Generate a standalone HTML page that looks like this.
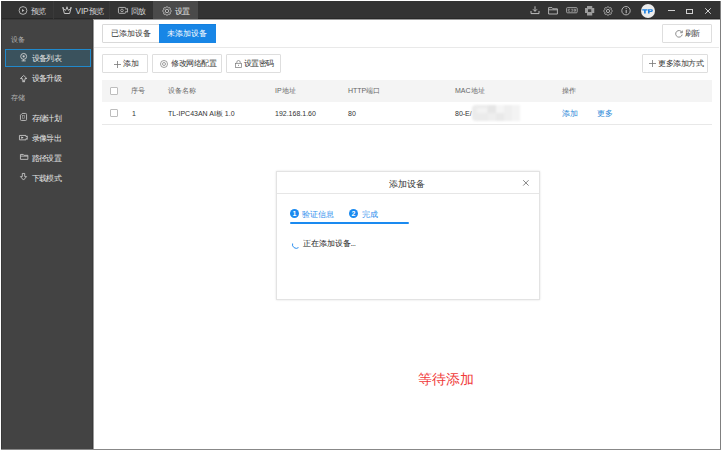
<!DOCTYPE html>
<html><head><meta charset="utf-8">
<style>
*{margin:0;padding:0;box-sizing:border-box;}
html,body{width:722px;height:451px;overflow:hidden;background:#fff;font-family:"Liberation Sans",sans-serif;position:relative;}
.a{position:absolute;white-space:nowrap;}
svg{position:absolute;overflow:visible;}
.tab{position:absolute;top:1px;height:18px;color:#d8d8d8;font-size:8px;line-height:22px;white-space:nowrap;letter-spacing:-0.8px;}
.sep{position:absolute;top:1px;width:1px;height:18px;background:#3a3a3a;}
.sh{position:absolute;left:11px;color:#b4b4b4;font-size:6.6px;line-height:7px;white-space:nowrap;}
.si{position:absolute;left:31.6px;color:#e6e6e6;font-size:8px;line-height:8px;white-space:nowrap;letter-spacing:-0.55px;}
.btn{position:absolute;border:1px solid #dedede;border-radius:1px;background:#fff;}
.bt{position:absolute;color:#333;font-size:7.6px;line-height:8px;white-space:nowrap;}
.th{position:absolute;color:#666;font-size:7px;line-height:8px;white-space:nowrap;}
.td{position:absolute;color:#333;font-size:7px;line-height:8px;white-space:nowrap;}
.cb{position:absolute;width:8px;height:8px;border:1px solid #bdbdbd;border-radius:1px;background:#fff;}
</style></head><body>
<svg width="0" height="0" style="position:absolute"><defs>
<path id="gear" d="M9.40 5.00 L9.35 5.23 L9.21 5.44 L9.00 5.63 L8.76 5.80 L8.53 5.94 L8.32 6.08 L8.18 6.22 L8.12 6.39 L8.11 6.59 L8.16 6.82 L8.23 7.10 L8.28 7.38 L8.29 7.66 L8.24 7.92 L8.11 8.11 L7.92 8.24 L7.66 8.29 L7.38 8.28 L7.10 8.23 L6.83 8.16 L6.59 8.11 L6.39 8.12 L6.22 8.18 L6.08 8.32 L5.94 8.53 L5.80 8.76 L5.63 9.00 L5.44 9.21 L5.23 9.35 L5.00 9.40 L4.77 9.35 L4.56 9.21 L4.37 9.00 L4.20 8.76 L4.06 8.53 L3.92 8.32 L3.78 8.18 L3.61 8.12 L3.41 8.11 L3.18 8.16 L2.90 8.23 L2.62 8.28 L2.34 8.29 L2.08 8.24 L1.89 8.11 L1.76 7.92 L1.71 7.66 L1.72 7.38 L1.77 7.10 L1.84 6.82 L1.89 6.59 L1.88 6.39 L1.82 6.22 L1.68 6.08 L1.47 5.94 L1.24 5.80 L1.00 5.63 L0.79 5.44 L0.65 5.23 L0.60 5.00 L0.65 4.77 L0.79 4.56 L1.00 4.37 L1.24 4.20 L1.47 4.06 L1.68 3.92 L1.82 3.78 L1.88 3.61 L1.89 3.41 L1.84 3.18 L1.77 2.90 L1.72 2.62 L1.71 2.34 L1.76 2.08 L1.89 1.89 L2.08 1.76 L2.34 1.71 L2.62 1.72 L2.90 1.77 L3.17 1.84 L3.41 1.89 L3.61 1.88 L3.78 1.82 L3.92 1.68 L4.06 1.47 L4.20 1.24 L4.37 1.00 L4.56 0.79 L4.77 0.65 L5.00 0.60 L5.23 0.65 L5.44 0.79 L5.63 1.00 L5.80 1.24 L5.94 1.47 L6.08 1.68 L6.22 1.82 L6.39 1.88 L6.59 1.89 L6.83 1.84 L7.10 1.77 L7.38 1.72 L7.66 1.71 L7.92 1.76 L8.11 1.89 L8.24 2.08 L8.29 2.34 L8.28 2.62 L8.23 2.90 L8.16 3.18 L8.11 3.41 L8.12 3.61 L8.18 3.78 L8.32 3.92 L8.53 4.06 L8.76 4.20 L9.00 4.37 L9.21 4.56 L9.35 4.77Z"/>
</defs></svg>
<!-- frame -->
<div class="a" style="left:1px;top:1px;width:1px;height:449px;background:#383838"></div>
<div class="a" style="left:720px;top:1px;width:1px;height:449px;background:#808080"></div>
<div class="a" style="left:1px;top:449px;width:720px;height:1px;background:#888"></div>

<!-- top bar -->
<div class="a" style="left:2px;top:1px;width:718px;height:18px;background:#333;border-bottom:1px solid #282828"></div>
<div class="a" style="left:94px;top:19px;width:626px;height:1px;background:#9a9a9a"></div>
<svg style="left:18px;top:6px" width="10" height="10" viewBox="0 0 10 10"><circle cx="5" cy="4.5" r="3.9" fill="none" stroke="#bdbdbd" stroke-width="0.9"/><path d="M4 2.9 L6.4 4.5 L4 6.1Z" fill="#bdbdbd"/></svg>
<div class="tab" style="left:31px">预览</div>
<div class="sep" style="left:53px"></div>
<svg style="left:62px;top:6px" width="10" height="9" viewBox="0 0 10 9"><path d="M1 2.2 L2.4 7.5 H7.6 L9 2.2 L6.6 4.4 L5 1.6 L3.4 4.4Z" fill="none" stroke="#c4c4c4" stroke-width="1" stroke-linejoin="round"/><circle cx="1" cy="1.8" r="0.8" fill="#c4c4c4"/><circle cx="5" cy="1.2" r="0.8" fill="#c4c4c4"/><circle cx="9" cy="1.8" r="0.8" fill="#c4c4c4"/></svg>
<div class="tab" style="left:75.5px;letter-spacing:0;line-height:21px"><span style="font-size:8.4px;letter-spacing:-0.15px">VIP</span><span style="letter-spacing:-1px">预览</span></div>
<div class="sep" style="left:109px"></div>
<svg style="left:118px;top:7px" width="10" height="7" viewBox="0 0 10 7"><path d="M1.3 0.45 H6.9 Q7.7 0.45 7.7 1.3 V2.2 L9.55 1.6 V5.1 L7.7 4.5 V5.4 Q7.7 6.3 6.9 6.3 H1.3 Q0.45 6.3 0.45 5.4 V1.3 Q0.45 0.45 1.3 0.45Z" fill="none" stroke="#bdbdbd" stroke-width="0.9" stroke-linejoin="round"/><circle cx="4" cy="3.4" r="1.3" fill="none" stroke="#bdbdbd" stroke-width="0.8"/></svg>
<div class="tab" style="left:131px">回放</div>
<div class="a" style="left:153px;top:1px;width:45px;height:18px;background:#4a4a4a"></div>
<svg style="left:162px;top:5.5px" width="10" height="10" viewBox="0 0 10 10"><use href="#gear" fill="none" stroke="#cfcfcf" stroke-width="0.9"/><circle cx="5" cy="5" r="1.7" fill="none" stroke="#cfcfcf" stroke-width="0.8"/></svg>
<div class="tab" style="left:175px;color:#e8e8e8">设置</div>

<!-- right icons -->
<svg style="left:530px;top:6px" width="10" height="9" viewBox="0 0 10 9"><path d="M5 0.3 V5.3 M3 3.3 L5 5.3 L7 3.3 M1 5 V7.6 H9 V5" fill="none" stroke="#bdbdbd" stroke-width="1"/></svg>
<svg style="left:548px;top:7px" width="10" height="8" viewBox="0 0 10 8"><path d="M0.6 0.6 H4 L5 1.8 H9.4 V7 H0.6Z M0.6 2.8 H9.4" fill="none" stroke="#bdbdbd" stroke-width="0.9"/></svg>
<svg style="left:565.5px;top:7.3px" width="12" height="6.5" viewBox="0 0 12 6.5"><rect x="0.6" y="0.6" width="10.6" height="5.2" rx="0.9" fill="none" stroke="#ababab" stroke-width="0.9"/><path d="M2.3 2.3 H4.2 M2.3 4.2 H4.2 M2.3 2.3 V4.2 M5.2 2.3 H6.8 V4.2 H5.2 M7.8 2.3 H9.5 V4.2 H7.8 M7.8 3.2 H9.5" fill="none" stroke="#ababab" stroke-width="0.7"/></svg>
<svg style="left:585px;top:5.75px" width="9.5" height="9.5" viewBox="0 0 9.5 9.5"><rect x="0" y="2" width="9.25" height="5" fill="#9c9c9c"/><rect x="2" y="0" width="5.25" height="9.5" fill="#9c9c9c"/><rect x="3" y="3.25" width="3.25" height="2.75" fill="#3a3a3a"/></svg>
<svg style="left:603px;top:5.7px" width="10" height="10" viewBox="0 0 10 10"><use href="#gear" fill="none" stroke="#bdbdbd" stroke-width="0.9"/><circle cx="5" cy="5" r="1.6" fill="none" stroke="#bdbdbd" stroke-width="0.9"/></svg>
<svg style="left:621.3px;top:6px" width="10" height="10" viewBox="0 0 10 10"><circle cx="5" cy="4.7" r="4.2" fill="none" stroke="#bdbdbd" stroke-width="0.9"/><path d="M5.2 3.9 V7.2" stroke="#c4c4c4" stroke-width="1"/><circle cx="5.2" cy="2.5" r="0.6" fill="#c4c4c4"/></svg>
<div class="a" style="left:641px;top:3.5px;width:14px;height:14px;border-radius:50%;background:#ececec"></div>
<svg style="left:642px;top:8.5px" width="11" height="5" viewBox="0 0 11 5"><path d="M0.2 0.2 H5.6 V1.6 H3.7 V4.6 H2.1 V1.6 H0.2Z M6 0.2 H9.6 Q10.9 0.2 10.9 1.6 Q10.9 3 9.6 3 H7.6 V4.6 H6Z M7.6 1.3 V1.9 H9.2 Q9.4 1.9 9.4 1.6 Q9.4 1.3 9.2 1.3Z" fill="#1a7fe0" fill-rule="evenodd"/></svg>
<div class="a" style="left:668px;top:10px;width:7px;height:1px;background:#d0d0d0"></div>
<div class="a" style="left:686px;top:8.5px;width:7px;height:5px;border:1px solid #d0d0d0;border-top-width:1.5px"></div>
<svg style="left:705px;top:7.5px" width="6" height="6" viewBox="0 0 6 6"><path d="M0.2 0.2 L5.8 5.8 M5.8 0.2 L0.2 5.8" stroke="#d0d0d0" stroke-width="1"/></svg>

<!-- sidebar -->
<div class="a" style="left:2px;top:20px;width:90px;height:429px;background:#434343"></div>
<div class="a" style="left:2px;top:19px;width:91px;height:1px;background:#383838"></div>
<div class="a" style="left:92px;top:19px;width:1px;height:430px;background:#3a3a3a"></div>
<div class="a" style="left:93px;top:19px;width:1px;height:430px;background:#9a9a9a"></div>
<div class="sh" style="top:36px">设备</div>
<svg style="left:20px;top:74.5px" width="8" height="8" viewBox="0 0 8 8"><path d="M3.65 0.45 L6.85 3.5 H5 V5.3 H2.3 V3.5 H0.45Z" fill="none" stroke="#c4c4c4" stroke-width="0.9" stroke-linejoin="round"/><rect x="2.3" y="5.8" width="2.7" height="1.4" fill="#b8b8b8"/></svg>
<svg style="left:20px;top:113.4px" width="7" height="8" viewBox="0 0 7 8"><path d="M2.2 0.45 H5.6 Q6.55 0.45 6.55 1.4 V6.5 Q6.55 7.45 5.6 7.45 H1.4 Q0.45 7.45 0.45 6.5 V2.2Z" fill="none" stroke="#c4c4c4" stroke-width="0.9"/><rect x="2.5" y="2.6" width="2" height="2.6" fill="none" stroke="#aaa" stroke-width="0.6"/></svg>
<svg style="left:19.2px;top:134.7px" width="9" height="6" viewBox="0 0 9 6"><path d="M0.45 0.45 H7 V1.8 L8.25 1 V4.3 L7 3.5 V4.85 H0.45Z" fill="none" stroke="#c4c4c4" stroke-width="0.9" stroke-linejoin="round"/><path d="M2.3 1.6 L4.6 2.65 L2.3 3.7Z" fill="#e8e8e8"/></svg>
<svg style="left:19.6px;top:154.2px" width="9" height="6" viewBox="0 0 9 6"><path d="M0.45 0.45 H3.3 L4.1 1.3 H7.85 V5.35 H0.45Z M0.45 2.1 H7.85" fill="none" stroke="#c4c4c4" stroke-width="0.9" stroke-linejoin="round"/></svg>
<svg style="left:20px;top:173.4px" width="7" height="8" viewBox="0 0 7 8"><path d="M2.3 0.45 H4.7 V3.6 H6.55 L3.5 7.05 L0.45 3.6 H2.3Z" fill="none" stroke="#c4c4c4" stroke-width="0.9" stroke-linejoin="round"/></svg>

<div class="a" style="left:5px;top:49px;width:86px;height:18px;background:#3a525d;border:1px solid #2089cc"></div>
<svg style="left:20px;top:53.4px" width="8" height="9" viewBox="0 0 8 9"><circle cx="3.65" cy="3.4" r="2.95" fill="none" stroke="#cfcfcf" stroke-width="0.9"/><circle cx="3.65" cy="3.4" r="1.1" fill="#cfcfcf"/><path d="M1.6 7.9 H5.7 M3.65 6.3 V7.9" stroke="#cfcfcf" stroke-width="0.9"/></svg>
<div class="si" style="top:54.5px">设备列表</div>
<div class="si" style="top:74.5px">设备升级</div>
<div class="sh" style="top:94px">存储</div>
<div class="si" style="top:114.5px">存储计划</div>
<div class="si" style="top:134.5px">录像导出</div>
<div class="si" style="top:155px">路径设置</div>
<div class="si" style="top:175px">下载模式</div>

<!-- tabs -->
<div class="btn" style="left:102px;top:24px;width:58px;height:19px;border-color:#d9d9d9"></div>
<div class="bt" style="left:111px;top:30px;color:#333">已添加设备</div>
<div class="a" style="left:159px;top:24px;width:57px;height:19px;background:#1886e6;border-top:1px solid #1380df"></div>
<div class="bt" style="left:167px;top:30px;color:#fff">未添加设备</div>
<div class="btn" style="left:662px;top:24px;width:50px;height:19px"></div>
<svg style="left:675px;top:29.5px" width="8" height="8" viewBox="0 0 8 8"><path d="M6.9 2.3 A3.3 3.3 0 1 0 7.2 4.6" fill="none" stroke="#707070" stroke-width="0.8"/><path d="M7.3 0.6 V2.7 H5.2" fill="none" stroke="#707070" stroke-width="0.8"/></svg>
<div class="bt" style="left:685px;top:30px;letter-spacing:-1px">刷新</div>
<div class="a" style="left:94px;top:47px;width:625px;height:1px;background:#e9e9e9"></div>

<!-- toolbar -->
<div class="btn" style="left:102px;top:54px;width:46px;height:19px"></div>
<svg style="left:114px;top:60.5px" width="7" height="7" viewBox="0 0 7 7"><path d="M3.5 0 V7 M0 3.5 H7" stroke="#777" stroke-width="0.8"/></svg>
<div class="bt" style="left:123px;top:60px">添加</div>
<div class="btn" style="left:152px;top:54px;width:70px;height:19px"></div>
<svg style="left:160px;top:60px" width="8" height="8" viewBox="0 0 8 8"><circle cx="4" cy="4" r="3.5" fill="none" stroke="#777" stroke-width="0.7"/><circle cx="4" cy="4" r="1.5" fill="none" stroke="#777" stroke-width="0.7"/></svg>
<div class="bt" style="left:171px;top:60px;letter-spacing:-0.5px">修改网络配置</div>
<div class="btn" style="left:226px;top:54px;width:55px;height:19px"></div>
<svg style="left:235px;top:59.5px" width="7" height="8" viewBox="0 0 7 8"><path d="M1.8 3.3 V2.2 A1.7 1.7 0 0 1 5.2 2.2 V3.3" fill="none" stroke="#777" stroke-width="0.7"/><rect x="0.5" y="3.3" width="6" height="4.2" fill="none" stroke="#777" stroke-width="0.7"/><path d="M3.5 4.8 V6" stroke="#777" stroke-width="0.7"/></svg>
<div class="bt" style="left:244px;top:60px;letter-spacing:-0.7px">设置密码</div>
<div class="btn" style="left:642px;top:54px;width:66px;height:19px"></div>
<svg style="left:649px;top:60px" width="7" height="7" viewBox="0 0 7 7"><path d="M3.5 0 V7 M0 3.5 H7" stroke="#777" stroke-width="0.8"/></svg>
<div class="bt" style="left:658px;top:60px;letter-spacing:-0.4px">更多添加方式</div>

<!-- table -->
<div class="a" style="left:102px;top:80px;width:610px;height:22px;background:#f4f4f4"></div>
<div class="cb" style="left:110px;top:87px"></div>
<div class="th" style="left:131px;top:87px">序号</div>
<div class="th" style="left:168px;top:87px">设备名称</div>
<div class="th" style="left:275px;top:87px">IP地址</div>
<div class="th" style="left:348px;top:87px">HTTP端口</div>
<div class="th" style="left:455px;top:87px">MAC地址</div>
<div class="th" style="left:562px;top:87px">操作</div>

<div class="cb" style="left:110px;top:109px"></div>
<div class="td" style="left:132px;top:110px">1</div>
<div class="td" style="left:168px;top:110px">TL-IPC43AN AI板 1.0</div>
<div class="td" style="left:275px;top:110px">192.168.1.60</div>
<div class="td" style="left:348px;top:110px">80</div>
<div class="td" style="left:455px;top:110px">80-E/</div>
<div class="a" style="left:471px;top:105px;width:49px;height:16px;filter:blur(0.8px)">
<div class="a" style="left:1px;top:0;width:17px;height:16px;background:#ebebeb;border-radius:4px 0 0 4px"></div>
<div class="a" style="left:6px;top:3px;width:10px;height:5px;background:#f3f3f3"></div>
<div class="a" style="left:17px;top:0;width:8px;height:8px;background:#e6e6e6"></div>
<div class="a" style="left:17px;top:8px;width:8px;height:8px;background:#eeeeee"></div>
<div class="a" style="left:25px;top:0;width:8px;height:8px;background:#f5f5f5"></div>
<div class="a" style="left:25px;top:8px;width:8px;height:8px;background:#e9e9e9"></div>
<div class="a" style="left:33px;top:0;width:8px;height:16px;background:#efefef"></div>
<div class="a" style="left:41px;top:0;width:8px;height:16px;background:#f3f3f3"></div>
</div>
<div class="td" style="left:562px;top:110px;color:#2d8ad8;font-size:7.6px">添加</div>
<div class="td" style="left:597px;top:110px;color:#2d8ad8;font-size:7.6px">更多</div>
<div class="a" style="left:102px;top:124px;width:610px;height:1px;background:#e8e8e8"></div>

<!-- dialog -->
<div class="a" style="left:276px;top:171px;width:264px;height:129px;background:#fff;border:1px solid #e3e3e3;box-shadow:0 0 2px rgba(0,0,0,0.12)"></div>
<div class="a" style="left:277px;top:193px;width:262px;height:1px;background:#e6e6e6"></div>
<div class="a" style="left:389px;top:179.5px;font-size:9px;line-height:9px;color:#333">添加设备</div>
<svg style="left:523px;top:180.2px" width="6" height="6" viewBox="0 0 6 6"><path d="M0.2 0.2 L5.6 5.6 M5.6 0.2 L0.2 5.6" stroke="#666" stroke-width="0.8"/></svg>
<div class="a" style="left:290px;top:209px;width:9px;height:9px;border-radius:50%;background:#1a8af0;color:#fff;font-size:7px;font-weight:bold;line-height:9px;text-align:center">1</div>
<div class="a" style="left:302px;top:211px;font-size:7.6px;line-height:8px;color:#2d8eee">验证信息</div>
<div class="a" style="left:349px;top:209px;width:9px;height:9px;border-radius:50%;background:#1a8af0;color:#fff;font-size:7px;font-weight:bold;line-height:9px;text-align:center">2</div>
<div class="a" style="left:362px;top:211px;font-size:7.6px;line-height:8px;color:#2d8eee">完成</div>
<div class="a" style="left:290px;top:221.5px;width:119px;height:2px;background:#1a8af0;border-radius:1px"></div>
<svg style="left:292px;top:241px" width="8" height="8" viewBox="0 0 8 8"><path d="M0.6 2.5 A3.8 3.8 0 0 0 6.5 6.6" fill="none" stroke="#2a8ef0" stroke-width="1"/></svg>
<div class="a" style="left:303px;top:239.5px;font-size:7.8px;line-height:8px;color:#222">正在添加设备<span style="font-size:8px;letter-spacing:-0.6px;position:relative;left:-0.5px">...</span></div>

<div class="a" style="left:418px;top:371px;font-size:14px;line-height:16px;color:#f03a3a">等待添加</div>
</body></html>
